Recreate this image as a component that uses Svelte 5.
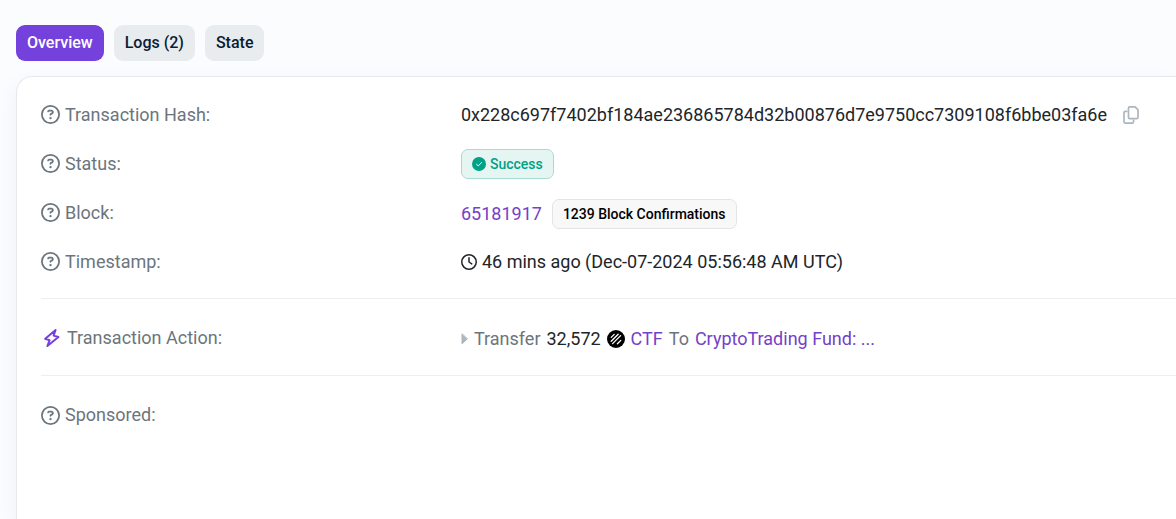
<script lang="ts">
  const tabs = ["Overview", "Logs (2)", "State"];
  let active = $state("Overview");

  const hash = "0x228c697f7402bf184ae236865784d32b00876d7e9750cc7309108f6bbe03fa6e";

  function copyHash() {
    navigator.clipboard?.writeText(hash);
  }
</script>

{#snippet label(text: string)}
  <dt>
    <svg class="help" viewBox="0 0 512 512" aria-hidden="true">
      <path
        d="M464 256A208 208 0 1 0 48 256a208 208 0 1 0 416 0zM0 256a256 256 0 1 1 512 0A256 256 0 1 1 0 256zm169.8-90.7c7.9-22.3 29.1-37.3 52.8-37.3h58.3c34.9 0 63.1 28.3 63.1 63.1c0 22.6-12.1 43.5-31.7 54.8L280 264.4c-.2 13-10.9 23.6-24 23.6c-13.3 0-24-10.7-24-24V250.5c0-8.6 4.6-16.5 12.1-20.8l44.3-25.4c4.7-2.7 7.6-7.7 7.6-13.1c0-8.4-6.8-15.1-15.1-15.1H222.6c-3.4 0-6.4 2.1-7.5 5.3l-.4 1.2c-4.4 12.5-18.2 19-30.6 14.6s-19-18.2-14.6-30.6l.4-1.2zM224 352a32 32 0 1 1 64 0 32 32 0 1 1 -64 0z"
      />
    </svg>
    {text}
  </dt>
{/snippet}

<main>
  <nav>
    {#each tabs as tab}
      <button class="tab" class:active={tab === active} onclick={() => (active = tab)}>{tab}</button>
    {/each}
  </nav>

  <section class="card">
    <dl>
      <div class="row">
        {@render label("Transaction Hash:")}
        <dd>
          <span>{hash}</span>
          <button class="copy" aria-label="Copy transaction hash" onclick={copyHash}>
            <svg viewBox="0 0 448 512" aria-hidden="true">
              <path d="M192 24h148l84 84v212a40 40 0 0 1-40 40H192a40 40 0 0 1-40-40V64a40 40 0 0 1 40-40z" />
              <path d="M104 152H64a40 40 0 0 0-40 40v256a40 40 0 0 0 40 40h192a40 40 0 0 0 40-40v-40" />
            </svg>
          </button>
        </dd>
      </div>
      <div class="row">
        {@render label("Status:")}
        <dd>
          <span class="badge success">
            <svg viewBox="0 0 14 14" aria-hidden="true">
              <circle cx="7" cy="7" r="7" />
              <path d="M4.5 7.2l1.8 1.7 3.3-3.4" />
            </svg>
            Success
          </span>
        </dd>
      </div>
      <div class="row">
        {@render label("Block:")}
        <dd class="block">
          <a href="#block">65181917</a>
          <span class="badge">1239 Block Confirmations</span>
        </dd>
      </div>
      <div class="row">
        {@render label("Timestamp:")}
        <dd class="time">
          <svg viewBox="0 0 512 512" aria-hidden="true">
            <circle cx="256" cy="256" r="232" />
            <path d="M256 120v136l88 60" />
          </svg>
          46 mins ago (Dec-07-2024 05:56:48 AM UTC)
        </dd>
      </div>
    </dl>

    <hr />

    <dl>
      <div class="row">
        <dt class="action">
          <svg viewBox="0 0 18 20" aria-hidden="true">
            <path d="M12.6 2L2.2 10.8l4.4 1.4L4.4 18l11-9-4.8-1.4z" />
          </svg>
          Transaction Action:
        </dt>
        <dd class="transfer">
          <svg class="caret" viewBox="0 0 7 12" aria-hidden="true">
            <path d="M1 1.2v9.6L6.2 6z" />
          </svg>
          <span class="muted">Transfer</span>
          <span>32,572</span>
          <svg class="token" viewBox="0 0 18 18" aria-hidden="true">
            <circle cx="9" cy="9" r="9" />
            <path d="M4.2 7.4l3-3M4.2 11.2l7-7M5.6 13.6l8-8M10.4 13.8l3.4-3.4" />
          </svg>
          <a href="#ctf">CTF</a>
          <span class="muted">To</span>
          <a href="#fund">CryptoTrading Fund: ...</a>
        </dd>
      </div>
    </dl>

    <hr />

    <dl>
      <div class="row">
        {@render label("Sponsored:")}
        <dd></dd>
      </div>
    </dl>
  </section>
</main>

<style>
  :global(body) {
    margin: 0;
    background: #fbfcfe;
  }
  main {
    box-sizing: border-box;
    min-height: 100vh;
    padding: 25px 0 0 16px;
    display: flex;
    flex-direction: column;
    gap: 15px;
    overflow: hidden;
    font-family: Roboto, sans-serif;
    font-size: 18px;
    line-height: 24px;
    color: #212529;
  }
  nav {
    display: flex;
    gap: 10px;
  }
  button {
    font-family: inherit;
    border: 0;
    cursor: pointer;
  }
  .tab {
    height: 36px;
    padding: 0 11px 2px;
    border-radius: 9px;
    background: #e9ecef;
    color: #081d35;
    font-size: 16px;
    font-weight: 500;
  }
  .tab.active {
    background: #7441dc;
    color: #fff;
  }
  .card {
    flex: 1;
    padding: 13px 0 24px 24px;
    background: #fff;
    border: solid #e6e8ec;
    border-width: 1px 0 0 1px;
    border-radius: 16px 0 0 0;
    box-shadow: 0 8px 20px rgba(189, 197, 209, 0.2);
  }
  dl {
    margin: 0;
  }
  .row {
    display: grid;
    grid-template-columns: 37% 1fr;
    align-items: center;
    min-height: 49px;
  }
  dt,
  dd {
    display: flex;
    align-items: center;
    margin: 0;
    white-space: nowrap;
  }
  dt {
    gap: 5px;
    color: #6c757d;
  }
  svg {
    flex: none;
    fill: none;
    stroke-linecap: round;
    stroke-linejoin: round;
  }
  .help {
    width: 19px;
    height: 19px;
    fill: currentColor;
  }
  a {
    color: #7441c8;
    text-decoration: none;
  }
  .copy {
    display: flex;
    margin-left: 16px;
    padding: 0;
    background: none;
    color: #adb5bd;
  }
  .copy svg {
    width: 16px;
    height: 18px;
    stroke: currentColor;
    stroke-width: 48;
  }
  .badge {
    box-sizing: border-box;
    display: flex;
    align-items: center;
    gap: 4px;
    height: 30px;
    padding: 0 10px;
    border: 1px solid #e2e5e8;
    border-radius: 7px;
    background: #f8f8f9;
    color: #000;
    font-size: 14px;
    font-weight: 500;
  }
  .badge.success {
    border-color: #a9dcd1;
    background: #e5f5f2;
    color: #00a186;
  }
  .badge svg {
    width: 14px;
    height: 14px;
    stroke: #fff;
    stroke-width: 1;
  }
  .badge circle {
    fill: #00a186;
    stroke: none;
  }
  .block {
    gap: 10px;
    padding-top: 2px;
  }
  .time {
    gap: 5px;
  }
  .time svg {
    width: 16px;
    height: 16px;
    stroke: currentColor;
    stroke-width: 48;
  }
  hr {
    margin: 12px 0 14px;
    border: 0;
    border-top: 1px solid #eceef0;
  }
  hr + dl .row {
    min-height: 50px;
  }
  .action {
    gap: 4px;
  }
  .action svg {
    width: 22px;
    height: 20px;
    stroke: #7441dc;
    stroke-width: 2;
  }
  .transfer {
    gap: 6px;
    padding-top: 2px;
  }
  .caret {
    width: 7px;
    height: 12px;
    fill: #adb5bd;
    stroke: #adb5bd;
  }
  .muted {
    color: #6c757d;
  }
  .token {
    width: 18px;
    height: 18px;
    stroke: #fff;
    stroke-width: 1.3;
  }
  .token circle {
    fill: #000;
    stroke: none;
  }
</style>
